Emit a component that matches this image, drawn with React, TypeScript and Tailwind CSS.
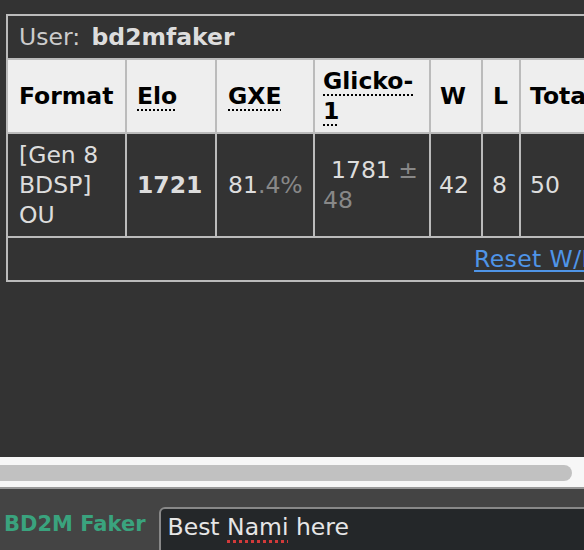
import React from "react";

const abbr = "underline decoration-dotted decoration-2 underline-offset-[5px]";

export default function App() {
  return (
    <div className="w-[584px] h-[550px] bg-[#333333] flex flex-col overflow-hidden font-['DejaVu_Sans',Verdana,sans-serif]">
      <div className="flex-1 min-h-0 overflow-hidden pt-[14px] pl-[6px]">
        <div className="grid w-max grid-cols-[117px_88px_96px_114px_50px_36px_84px] gap-[2px] p-[2px] bg-[#bbbbbb] text-[23.5px] leading-[30px]">
          <div className="col-span-7 bg-[#333333] px-[11px] py-[6px] text-[#cccccc] whitespace-nowrap">
            User: <strong className="ml-[4px] text-[#dddddd] font-bold">bd2mfaker</strong>
          </div>

          <div className="bg-[#eeeeee] text-black font-bold px-[11px] py-[6px] flex items-center">Format</div>
          <div className="bg-[#eeeeee] text-black font-bold px-[10px] py-[6px] flex items-center">
            <span className={abbr}>Elo</span>
          </div>
          <div className="bg-[#eeeeee] text-black font-bold px-[11px] py-[6px] flex items-center">
            <span className={abbr}>GXE</span>
          </div>
          <div className="bg-[#eeeeee] text-black font-bold px-[8px] py-[6px] flex items-center">
            <span className={abbr}>
              Glicko-
              <br />1
            </span>
          </div>
          <div className="bg-[#eeeeee] text-black font-bold px-[9px] py-[6px] flex items-center">W</div>
          <div className="bg-[#eeeeee] text-black font-bold px-[10px] py-[6px] flex items-center">L</div>
          <div className="bg-[#eeeeee] text-black font-bold px-[9px] py-[6px] flex items-center whitespace-nowrap overflow-hidden">Total</div>

          <div className="bg-[#333333] text-[#dddddd] px-[11px] py-[6px] flex items-center">
            <span>
              [Gen 8
              <br />
              BDSP]
              <br />
              OU
            </span>
          </div>
          <div className="bg-[#333333] text-[#dddddd] font-bold px-[10px] py-[6px] flex items-center">1721</div>
          <div className="bg-[#333333] text-[#dddddd] px-[11px] py-[6px] flex items-center whitespace-nowrap">
            <span>
              81<span className="text-[#888888]">.4%</span>
            </span>
          </div>
          <div className="bg-[#333333] text-[#dddddd] px-[8px] py-[6px] flex items-center">
            <span>
              <span className="pl-[8px]">1781</span>
              <span className="text-[#888888]">
                {" "}±
                <br />
                48
              </span>
            </span>
          </div>
          <div className="bg-[#333333] text-[#dddddd] px-[8px] py-[6px] flex items-center">42</div>
          <div className="bg-[#333333] text-[#dddddd] px-[9px] py-[6px] flex items-center">8</div>
          <div className="bg-[#333333] text-[#dddddd] px-[9px] py-[6px] flex items-center">50</div>

          <div className="col-span-7 bg-[#333333] px-[10px] py-[6px] flex justify-end">
            <a className="text-[#4f95e8] underline underline-offset-[3px] whitespace-nowrap cursor-pointer tracking-[0.4px]">Reset W/L</a>
          </div>
        </div>
      </div>

      <div className="shrink-0 h-[30px] bg-[#f7f7f7] pt-[8px] overflow-hidden">
        <div className="h-[16px] w-[580px] -ml-[8px] rounded-full bg-[#c1c1c1]" />
      </div>
      <div className="shrink-0 h-[2px] bg-[#999999]" />
      <div className="shrink-0 h-[61px] bg-[#444444] flex items-start pt-[18px] pl-[4px] gap-[13px] overflow-hidden">
        <div className="shrink-0 text-[#3aa37e] font-bold text-[21px] leading-[34px] whitespace-nowrap">BD2M Faker</div>
        <div className="shrink-0 w-[450px] h-[60px] border-2 border-[#888888] rounded-[6px] bg-[#242729] px-[7px] text-[#e6e6e6] text-[23.5px] leading-[36px] whitespace-nowrap">
          Best{" "}
          <span className="underline decoration-dotted decoration-[#d23a3a] decoration-[3px] underline-offset-[5px]">Nami</span>{" "}
          here
        </div>
      </div>
    </div>
  );
}
